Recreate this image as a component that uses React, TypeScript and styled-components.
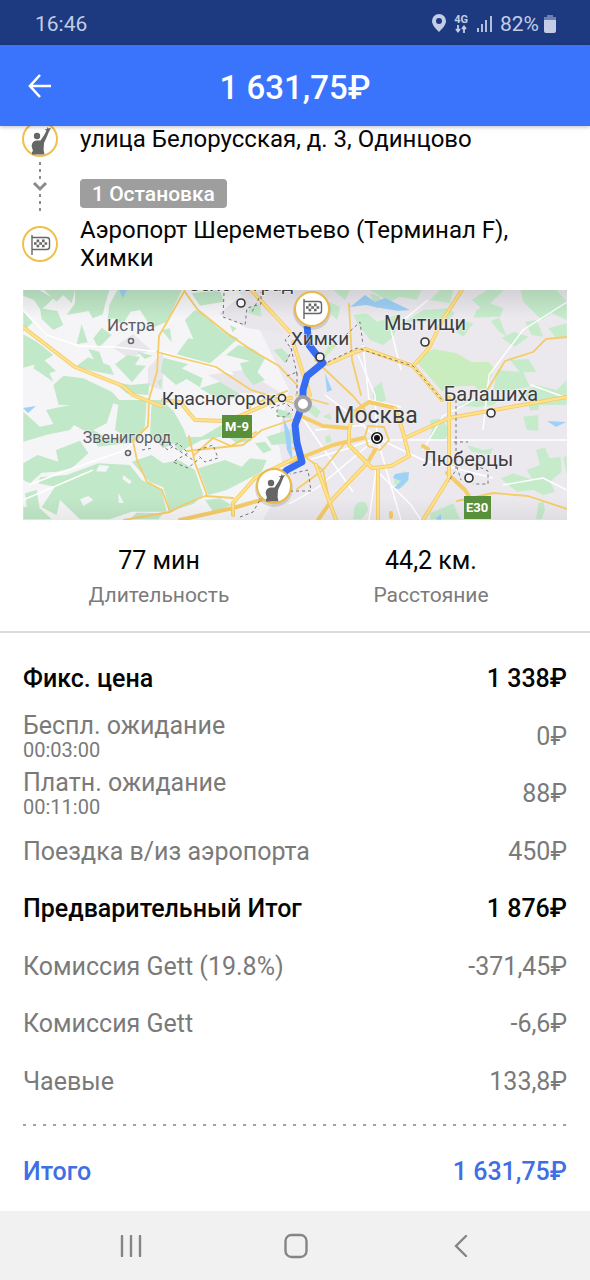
import React from "react";
import styled, { createGlobalStyle } from "styled-components";

const GlobalStyle = createGlobalStyle`
  *, *::before, *::after { box-sizing: border-box; }
  body {
    margin: 0;
    background: #ffffff;
    font-family: Roboto, "Noto Sans", sans-serif;
    color: #050505;
  }
  button { border: 0; padding: 0; background: none; cursor: pointer; }
`;

const Screen = styled.div`
  display: flex;
  flex-direction: column;
  min-height: 100vh;
`;

const StatusBar = styled.div`
  display: flex;
  align-items: center;
  justify-content: space-between;
  height: 45px;
  padding: 2px 34px 0 35px;
  background: #1d397f;
  color: #c3cde6;
  font-size: 21px;
  line-height: 24px;
`;

const StatusIcons = styled.div`
  display: flex;
  align-items: center;
  gap: 8px;
`;

const Network = styled.span`
  display: flex;
  flex-direction: column;
  align-items: center;
  font-size: 11px;
  font-weight: 700;
  line-height: 10px;
`;

const Battery = styled.span`
  display: flex;
  align-items: center;
  gap: 5px;
`;

const Header = styled.header`
  position: relative;
  z-index: 1;
  display: grid;
  grid-template-columns: 80px 1fr 80px;
  align-items: center;
  height: 81px;
  background: #3a74fd;
  color: #ffffff;
  box-shadow: 0 1px 4px rgba(0, 0, 0, 0.25);
`;

const BackButton = styled.button`
  display: flex;
  align-items: center;
  justify-content: center;
  height: 80px;
`;

const Title = styled.h1`
  margin: 0;
  padding-top: 4px;
  text-align: center;
  font-size: 33px;
  font-weight: 500;
  line-height: 40px;
`;

const Main = styled.main`
  flex: 1;
`;

const Route = styled.section`
  display: grid;
  grid-template-columns: 34px 1fr;
  column-gap: 23px;
  margin-top: -5px;
  padding: 0 23px;
  font-size: 24px;
  line-height: 28px;
`;

const Marker = styled.div`
  display: flex;
  align-items: center;
  justify-content: center;
`;

const Address = styled.p`
  margin: 0;
  align-self: center;
`;

const StopCell = styled.div`
  display: flex;
  align-items: center;
  height: 59px;
  padding-top: 13px;
`;

const StopBadge = styled.span`
  padding: 1px 12px 0;
  border-radius: 4px;
  background: #9e9e9e;
  color: #ffffff;
  font-size: 21px;
  font-weight: 500;
  line-height: 28px;
`;

const MapFrame = styled.div`
  margin: 18px 23px 0;
  aspect-ratio: 544 / 230;
  overflow: hidden;

  svg { display: block; width: 100%; height: 100%; }
`;

const Stats = styled.dl`
  display: grid;
  grid-template-columns: 1fr 1fr;
  margin: 0;
  padding: 25px 23px 22px;
  border-bottom: 2px solid #dcdcdc;
  text-align: center;
`;

const Stat = styled.div`
  display: flex;
  flex-direction: column-reverse;
  gap: 4px;
`;

const StatValue = styled.dd`
  margin: 0;
  font-size: 25px;
  line-height: 32px;
`;

const StatLabel = styled.dt`
  color: #7b7b7b;
  font-size: 21px;
  line-height: 28px;
`;

const Fares = styled.div`
  padding: 17px 23px 0;
`;

const FareTable = styled.table`
  width: 100%;
  height: 460px;
  border-collapse: collapse;
  font-size: 25px;
  line-height: 27px;
`;

const FareRow = styled.tr<{ $strong?: boolean }>`
  height: 57px;
  color: ${(p) => (p.$strong ? "#050505" : "#7a7a7a")};
  font-weight: ${(p) => (p.$strong ? 500 : 400)};
`;

const FareName = styled.th`
  padding: 0;
  text-align: left;
  font-weight: inherit;
`;

const FareAmount = styled.td`
  padding: 0;
  text-align: right;
`;

const Duration = styled.small`
  display: block;
  font-size: 20px;
  line-height: 22px;
`;

const Divider = styled.svg`
  display: block;
  width: 100%;
  height: 3px;
  margin-top: 14px;
`;

const Total = styled.div`
  display: flex;
  justify-content: space-between;
  align-items: center;
  height: 84px;
  padding-top: 5px;
  color: #3f6fe4;
  font-size: 25px;
  font-weight: 500;
  line-height: 28px;
`;

const NavBar = styled.nav`
  display: flex;
  justify-content: center;
  height: 69px;
  padding: 0 47px 0 49px;
  background: #f1f1f1;
`;

const NavButton = styled.button`
  flex: 1;
  display: flex;
  align-items: center;
  justify-content: center;
`;

const PersonGlyph = () => (
  <g fill="#666666" stroke="none">
    <circle cx="15" cy="15" r="3.2" />
    <path d="M10 33.5V31L11 30L9.6 25Q10 20.5 14 19.6H18.5L22.5 13.5L24.5 9.5L22.5 8.5L25 8L25.5 6L26.5 7.6L29 7L27 10.5L25 15.5L22 22L21.6 29L22.5 33.5Z" />
  </g>
);

const FlagGlyph = () => (
  <g fill="none" stroke="#666666" strokeWidth="1.4">
    <path d="M10 9V29M10 11.5H24.5Q27.5 11.5 27.5 14V21Q27.5 23.5 24.5 23.5H10" />
    <path
      fill="#666666"
      stroke="none"
      d="M14.6 13.6h2.6v2.6h-2.6zM20 13.6h2.6v2.6h-2.6zM12 16.2h2.6v2.6h-2.6zM17.2 16.2h2.8v2.6h-2.8zM22.6 16.2h2.6v2.6h-2.6zM14.6 18.8h2.6v2.4h-2.6zM20 18.8h2.6v2.4h-2.6z"
    />
  </g>
);

const PinSvg = styled.svg`
  flex: none;
`;

const PinIcon = ({ kind }: { kind: "person" | "flag" }) => (
  <PinSvg width="36" height="36" viewBox="0 0 36 36" aria-hidden="true">
    <circle cx="18" cy="18" r="17" fill="#ffffff" stroke="#f0bf4c" strokeWidth="2" />
    {kind === "person" ? <PersonGlyph /> : <FlagGlyph />}
  </PinSvg>
);

const RouteArrow = () => (
  <svg width="16" height="54" viewBox="0 0 16 54" fill="none" stroke="#8b8b8b" aria-hidden="true">
    <path d="M8 2V20M8 34V52" strokeWidth="2" strokeDasharray="3 4" />
    <path d="M2 23L8 29L14 23" strokeWidth="3" />
  </svg>
);

const places = [
  { name: "Зеленоград", x: 218, y: 1, size: 19, dot: [218, 13], r: 4 },
  { name: "Истра", x: 108, y: 41, size: 17, dot: [108, 51], r: 2.5, soft: true },
  { name: "Химки", x: 297, y: 55, size: 19, dot: [297, 67], r: 4 },
  { name: "Мытищи", x: 402, y: 40, size: 20, dot: [402, 52], r: 4 },
  { name: "Красногорск", x: 196, y: 115, size: 19, dot: [259, 108], r: 3.5 },
  { name: "Балашиха", x: 468, y: 111, size: 20, dot: [468, 123], r: 4 },
  { name: "Москва", x: 353, y: 133, size: 23, dot: [354, 148], r: 4 },
  { name: "Звенигород", x: 104, y: 153, size: 16, dot: [105, 163], r: 2.5, soft: true },
  { name: "Люберцы", x: 445, y: 176, size: 20, dot: [446, 188], r: 4 },
];

const TripMap = () => (
  <svg viewBox="0 0 544 230" preserveAspectRatio="xMidYMid slice" role="img" aria-label="Карта маршрута">
    <defs>
      <linearGradient id="edge" x1="0" y1="0" x2="0" y2="1">
        <stop offset="0" stopColor="#000" stopOpacity="0.1" />
        <stop offset="0.12" stopColor="#000" stopOpacity="0" />
        <stop offset="0.9" stopColor="#000" stopOpacity="0" />
        <stop offset="1" stopColor="#000" stopOpacity="0.05" />
      </linearGradient>
    </defs>
    <rect width="544" height="230" fill="#f5f5f7" />
    <path d="M215 0H544V230H240L262 190L255 150L266 100L232 30Z" fill="#ece9ee" />
    <path d="M125 78L140 62V100L125 96ZM90 58L110 44L128 60L106 68ZM185 85L220 80L260 104L215 103ZM215 8L240 14L262 44L224 38L196 24Z" fill="#e9e6eb" />

    {/* Countryside and forests, in thirds of a map unit */}
    <g transform="translate(-3 -5) scale(0.33333)" fill="#c1e8c8">
      <path d="M10 15H58L100 40L80 60L62 75L42 45L10 32ZM72 15H165L155 55L130 30L110 50ZM165 15H268L255 60L248 88L218 100L206 78L140 90L165 55ZM292 15H486L440 110L395 130L360 75L332 80L308 118L280 100L262 110L268 60ZM10 80L38 112L10 140ZM60 70L112 78L130 120L100 135L65 102ZM185 118L203 172L170 178ZM245 128L275 150L235 190L220 160ZM205 192L238 200L252 240L225 230ZM10 148L50 170L100 210L60 235L10 248ZM56 210L108 258L88 265L100 290L40 250ZM165 246L205 217L270 242L282 270L238 262ZM285 238L322 210L360 216L345 240L378 242L336 292L308 262ZM352 200L398 212L375 222ZM100 300L130 272L190 280L275 320L312 360H116ZM280 290L332 300L388 295L385 330L320 325ZM430 218L505 238L485 250L548 280L540 307L500 282L468 300L422 260ZM425 136L450 130L455 172ZM515 25L600 15L612 50L540 62ZM525 75L560 92L590 125L610 140L655 160L610 200L570 235L470 208L505 160L520 162L495 105ZM630 120L650 130L638 142ZM655 180L700 192L735 220L712 262L735 285L700 300L672 268L660 235L690 228L618 210ZM540 310L600 290L640 315L670 335L600 345ZM412 290L425 282L422 310ZM760 195L785 190L810 215L795 235ZM690 65L720 60L725 95L685 85Z" />
    </g>
    <g transform="translate(-3 110) scale(0.33333)" fill="#c1e8c8">
      <path d="M10 35L60 80L100 72L78 30L150 15L190 0H380L375 78L355 125L235 140L205 98L162 75L150 90L78 105L10 125ZM395 0H425L462 35L490 85L500 112L545 110L605 75V110L545 120L480 155L460 130L430 145L390 105ZM10 190L52 165L115 185L108 150L180 122L205 160L155 205L110 215L65 218L30 250L10 240ZM60 232L140 225L235 190L330 195L365 240L425 270L440 335L335 335L270 358H180L120 300L110 345L65 322L105 260L55 250ZM335 185L395 165L430 190L475 180L525 210L550 285L520 312L450 334L430 262L388 245ZM15 280L50 270L60 330L20 320ZM535 205L615 180L665 200L690 175L740 180L725 215L620 270L565 285ZM555 300L600 295L635 315L580 335ZM705 130L735 125L755 150L730 160ZM740 110L820 85V130L755 135ZM10 320L60 325L95 358H10ZM350 338L430 340L415 358H330ZM770 25L815 40V55L775 50ZM625 110L670 100L695 122L650 130Z" />
      <path fill="#f5f5f7" d="M68 125L102 120L108 137L80 142ZM260 70L280 10L295 15L285 90L310 105L270 120L220 90ZM238 195L268 198L258 215L228 214ZM310 225L336 245L328 252L308 238ZM295 278L312 310L296 308ZM180 298L205 288L220 300L190 318Z" />
    </g>
    <g transform="translate(267 -5) scale(0.33333)" fill="#c5ebcb">
      <path d="M240 15H395L380 45L330 35L300 50ZM240 25L268 35L282 60L258 72ZM190 90L230 85L262 110L335 85L310 155L280 180L240 165L205 120ZM345 110L400 75L475 70L495 85L470 110ZM450 15H490L480 55L420 45ZM545 45L590 15H642L580 75ZM560 75L600 55L640 70L630 95L550 98ZM502 105L550 115L520 155L498 140ZM692 15H800L830 50V105L785 85L755 105L725 75L700 50ZM602 108L628 98L650 155L628 140ZM635 160L672 140L715 155L675 185ZM705 110L740 105L760 155L725 150ZM775 130L830 115V160L795 155ZM660 225L715 222L740 262L690 262ZM622 255L700 262L720 305L640 320L610 315ZM700 320L738 300L800 315L830 285V360H730ZM130 15H180L165 45ZM115 50L150 65L142 105L125 90ZM250 310L275 290L288 345L268 360L248 340Z" />
      <path fill="#caedbf" d="M375 225L430 192L500 205L545 232L595 230L612 250L590 310L560 315L555 302L470 305L458 320ZM105 220L140 180L120 175L103 205Z" />
    </g>
    <g transform="translate(267 110) scale(0.33333)" fill="#c5ebcb">
      <path d="M420 60L455 55L478 90L465 120L418 118L425 90ZM632 235L670 220L728 240L710 210L750 195L738 150L765 142L778 175L812 170L815 215L780 245L795 275L760 285L730 270L680 275ZM500 15L560 0H625L612 15L560 22ZM715 10L750 5L745 30L720 32ZM700 50L745 45V92L710 90ZM820 175L830 165V225ZM192 325Q200 298 228 308L235 330L215 358H190ZM745 310L760 305L765 330L755 358H738ZM45 25L70 15L92 35L80 55ZM105 110L120 105L125 125L108 130ZM420 340L490 310L510 358H420ZM315 225L345 212L358 240L335 265L312 250ZM98 50L120 40L125 60ZM530 135L580 150L610 145L600 165L545 155Z" />
    </g>

    {/* Water */}
    <path d="M96 0H104L100 8ZM0 118L13 116L5 123ZM327 17L342 5L352 12L362 8L387 20L375 21L352 17L343 15ZM302 83L309 100L304 102ZM372 184L386 182L385 190L376 199L371 198L378 191L370 188ZM524 131L543 132L533 137ZM412 229L418 224V230ZM260 127L267 143L270 172L264 160Z" fill="#9fd0f7" />

    {/* Minor roads */}
    <g fill="none" stroke="#ffffff" strokeWidth="1.4" strokeLinejoin="round">
      <path d="M0 20L24 45L56 56L92 57L138 62M6 195L45 180L103 160L112 150M354 148L322 120L302 105M354 148L294 198L266 214M354 148L320 160L285 170M354 148L378 230M354 148L400 170L470 188M354 148L352 105L335 65M362 150L425 150L544 150M342 135L292 140M346 230L353 180L388 215L398 230M274 120L330 202M378 80L368 40L405 10M460 140L466 85L500 40L544 12M544 200L520 188L480 195M400 160L420 126L462 104M508 95L544 108M340 55L346 110L378 117M0 210L70 180M140 62L210 84" />
    </g>

    {/* Motorways */}
    <g fill="none" strokeLinejoin="round" strokeLinecap="round">
      <g stroke="#f5cc68">
        <path strokeWidth="1.8" d="M162 0L136 46L134 82L126 109L125 136L110 151L114 170L124 192L139 200L147 222M162 2L175 20L205 44L230 61L256 76L274 95M134 62L193 77L228 100L270 113M101 230L147 222L160 215L182 206L210 208M166 146L172 173L184 205M164 161L220 155L239 140L274 128M170 166L190 148L208 156L233 142M218 140L228 115L264 101M292 70L330 106L342 120M326 14L329 70L338 105M273 105L305 114M460 107L482 71L510 62L523 49L544 47M434 211L470 203L505 206L544 219M322 153L300 180L270 158M306 209L300 180L274 199M250 197L235 211M345 136L361 137L366 150L357 160L345 156L342 146Z" />
        <path strokeWidth="4" d="M0 37L52 77L100 96L110 105L138 116M140 110L157 112L172 130L203 131L219 125L254 110L268 108M228 0L267 42M270 52L287 105M305 74L332 62L342 59L390 76L419 110M390 76L406 58L419 31L439 0M267 172L310 155L340 148M280 127L300 136L325 138M293 175L313 230M382 148L426 128L460 122L544 107M426 108V188L400 230M424 183L442 200L451 214M331 122L326 140V155L349 178L368 176L386 166L380 142L372 118M331 122L346 112L372 118M355 178V230M352 160L345 172L308 211L295 230M210 225V213L232 188L260 174L274 167M157 230L210 218L238 210M368 227V223M400 156L405 159" />
      </g>
      <path stroke="#ffe28c" strokeWidth="2.2" d="M0 37L52 77L100 96L110 105L138 116M140 110L157 112L172 130L203 131L219 125L254 110L268 108M228 0L267 42M270 52L287 105M305 74L332 62L342 59L390 76L419 110M390 76L406 58L419 31L439 0M382 148L426 128L460 122L544 107M426 108V188L400 230M331 122L326 140V155L349 178L368 176L386 166L380 142L372 118M355 178V230M345 172L308 211M210 225V213L232 188L260 174L274 167M293 175L313 230" />
    </g>

    {/* District borders */}
    <g fill="none" stroke="#77747c" strokeWidth="1" strokeDasharray="3 3">
      <path d="M201 3L200 27L222 35L224 18L238 14V2M236 8L229 22M267 45L262 50L269 60L263 72M268 58L274 84M323 45L337 32L340 55M305 72L334 58L390 76L419 110M264 86L274 82V104M119 160L130 158M133 151L145 160L155 153L165 163L150 172L165 178L177 168M137 148L170 170M175 160L190 155L195 168L182 172L175 165M248 118L263 113L270 120L262 127L254 126V120M433 110V180L425 192M431 152H445M434 177L438 190M452 175L465 181V194H450M267 201H288L285 180L267 184M217 227L230 222L237 210" />
    </g>
    <rect width="544" height="230" fill="url(#edge)" />

    <g fill="#588f3b">
      <rect x="199" y="125" width="30" height="23" />
      <rect x="441" y="206" width="27" height="23" />
    </g>
    <g fill="#ffffff" fontSize="13" fontWeight="700" textAnchor="middle">
      <text x="214" y="141">М-9</text>
      <text x="454" y="222">E30</text>
    </g>

    {/* Trip line with its pickup, stop and destination */}
    <path d="M284 36L286 55L300 73L284 86L280 100V113L272 135L274 153L279 172L264 180L251 192" fill="none" stroke="#356cf2" strokeWidth="7" strokeLinejoin="round" />

    <g textAnchor="middle" stroke="#f6f5f8" strokeWidth="1.6" strokeOpacity="0.6" paintOrder="stroke">
      {places.map((p) => (
        <text key={p.name} x={p.x} y={p.y} fontSize={p.size} fill={p.soft ? "#5b5d62" : "#3c3d41"}>
          {p.name}
        </text>
      ))}
    </g>
    {places.map((p) => (
      <circle key={p.name} cx={p.dot[0]} cy={p.dot[1]} r={p.r} fill="#f4f3f5" stroke={p.soft ? "#66676b" : "#36373a"} strokeWidth="1.6" />
    ))}
    <circle cx="354" cy="148" r="5.2" fill="#ffffff" stroke="#111111" strokeWidth="1.6" />
    <circle cx="354" cy="148" r="3" fill="#111111" />

    <circle cx="280" cy="114" r="7" fill="#ffffff" stroke="#a09fa3" strokeWidth="4" />
    <g fill="#000000" fillOpacity="0.12">
      <circle cx="289" cy="21" r="19" />
      <circle cx="251" cy="198" r="19" />
    </g>
    <g stroke="#e9b94c" strokeWidth="2" fill="#ffffff">
      <circle cx="289" cy="19" r="17" />
      <circle cx="251" cy="196" r="17" />
    </g>
    <g transform="translate(271 0)"><FlagGlyph /></g>
    <g transform="translate(233 178)"><PersonGlyph /></g>
  </svg>
);

const fares = [
  { name: "Фикс. цена", amount: "1 338₽", strong: true },
  { name: "Беспл. ожидание", time: "00:03:00", amount: "0₽" },
  { name: "Платн. ожидание", time: "00:11:00", amount: "88₽" },
  { name: "Поездка в/из аэропорта", amount: "450₽" },
  { name: "Предварительный Итог", amount: "1 876₽", strong: true },
  { name: "Комиссия Gett (19.8%)", amount: "-371,45₽" },
  { name: "Комиссия Gett", amount: "-6,6₽" },
  { name: "Чаевые", amount: "133,8₽" },
];

export default function App() {
  return (
    <Screen>
      <GlobalStyle />
      <StatusBar>
        <span>16:46</span>
        <StatusIcons>
          <svg width="14" height="19" viewBox="0 0 14 19" fill="#c3cde6" aria-hidden="true">
            <path fillRule="evenodd" d="M7 0A7 7 0 0 0 0 7C0 11 4 15 7 18C10 15 14 11 14 7A7 7 0 0 0 7 0ZM7 4A3 3 0 1 1 7 10A3 3 0 0 1 7 4Z" />
          </svg>
          <Network>
            4G
            <svg width="12" height="8" viewBox="0 0 12 8" fill="none" stroke="#c3cde6" strokeWidth="1.8" aria-hidden="true">
              <path d="M3 0V6M1 4L3 6.5L5 4M9 8V2M7 4L9 1.5L11 4" />
            </svg>
          </Network>
          <svg width="16" height="18" viewBox="0 0 16 18" stroke="#c3cde6" strokeWidth="1.8" aria-hidden="true">
            <path d="M2 13V17M6 9V17M10 5V17M15 1V17" />
          </svg>
          <Battery>
            82%
            <svg width="12" height="18" viewBox="0 0 12 18" aria-hidden="true">
              <path d="M3 0H9V2H12V6H0V2H3Z" fill="#6d80b1" />
              <path d="M0 5H12V16Q12 18 10 18H2Q0 18 0 16Z" fill="#c3cde6" />
            </svg>
          </Battery>
        </StatusIcons>
      </StatusBar>

      <Header>
        <BackButton type="button" aria-label="Назад">
          <svg width="24" height="24" viewBox="0 0 24 24" fill="none" stroke="#ffffff" strokeWidth="2.6" aria-hidden="true">
            <path d="M12 1L2 12L12 23M2 12H23" />
          </svg>
        </BackButton>
        <Title>1 631,75₽</Title>
      </Header>

      <Main>
        <Route>
          <Marker><PinIcon kind="person" /></Marker>
          <Address>улица Белорусская, д. 3, Одинцово</Address>
          <Marker><RouteArrow /></Marker>
          <StopCell><StopBadge>1 Остановка</StopBadge></StopCell>
          <Marker><PinIcon kind="flag" /></Marker>
          <Address>Аэропорт Шереметьево (Терминал F), Химки</Address>
        </Route>

        <MapFrame><TripMap /></MapFrame>

        <Stats>
          <Stat>
            <StatLabel>Длительность</StatLabel>
            <StatValue>77 мин</StatValue>
          </Stat>
          <Stat>
            <StatLabel>Расстояние</StatLabel>
            <StatValue>44,2 км.</StatValue>
          </Stat>
        </Stats>

        <Fares>
          <FareTable>
            <tbody>
              {fares.map((f) => (
                <FareRow key={f.name} $strong={f.strong}>
                  <FareName scope="row">
                    {f.name}
                    {f.time && <Duration>{f.time}</Duration>}
                  </FareName>
                  <FareAmount>{f.amount}</FareAmount>
                </FareRow>
              ))}
            </tbody>
          </FareTable>
          <Divider aria-hidden="true">
            <line x1="0" y1="1" x2="100%" y2="1" stroke="#a3a3a3" strokeWidth="2" strokeDasharray="3 7" />
          </Divider>
          <Total>
            <span>Итого</span>
            <span>1 631,75₽</span>
          </Total>
        </Fares>
      </Main>

      <NavBar>
        <NavButton type="button" aria-label="Недавние">
          <svg width="22" height="22" viewBox="0 0 22 22" stroke="#858585" strokeWidth="2.4" strokeLinecap="round" aria-hidden="true">
            <path d="M2 1V21M11 1V21M20 1V21" />
          </svg>
        </NavButton>
        <NavButton type="button" aria-label="Домой">
          <svg width="24" height="26" viewBox="0 0 24 26" fill="none" stroke="#858585" strokeWidth="2.4" aria-hidden="true">
            <rect x="1.5" y="2" width="21" height="22" rx="6" />
          </svg>
        </NavButton>
        <NavButton type="button" aria-label="Назад">
          <svg width="14" height="22" viewBox="0 0 14 22" fill="none" stroke="#858585" strokeWidth="2.4" strokeLinecap="round" aria-hidden="true">
            <path d="M12 1L2 11L12 21" />
          </svg>
        </NavButton>
      </NavBar>
    </Screen>
  );
}
